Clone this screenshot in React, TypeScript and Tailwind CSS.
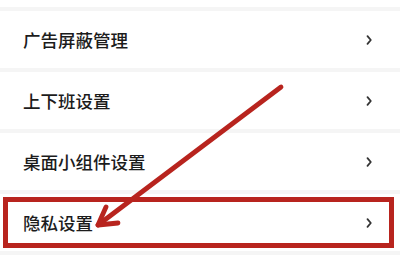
import React from "react";

const rows = ["广告屏蔽管理", "上下班设置", "桌面小组件设置", "隐私设置", ""];

function Chevron() {
    return (
        <svg width="8" height="12" viewBox="0 0 8 12" className="shrink-0">
            <path
                d="M2.5 2.2 L5.8 6 L2.5 9.8"
                fill="none"
                stroke="#333"
                strokeWidth="1.8"
                strokeLinecap="round"
                strokeLinejoin="round"
            />
        </svg>
    );
}

export default function App() {
    return (
        <div className="relative w-[400px] h-[272px] overflow-hidden bg-white font-['Noto_Sans_CJK_SC','Noto_Sans',sans-serif]">
            <div className="h-[7px]" />
            {rows.map((label, i) => (
                <div key={i}>
                    <div className="h-[4px] bg-[#f5f5f5]" />
                    <div className="h-[57px] flex items-center justify-between pl-[23px] pr-[27px]">
                        <span className="text-[17.5px] leading-none font-medium text-[#1c1c1c]">
                            {label}
                        </span>
                        {label ? <Chevron /> : null}
                    </div>
                </div>
            ))}

            {/* annotation box */}
            <div className="absolute left-[3px] top-[197px] w-[391px] h-[51px] border-[5px] border-[#b8241e]" />

            {/* annotation arrow */}
            <svg
                className="absolute inset-0 pointer-events-none"
                width="400"
                height="272"
                viewBox="0 0 400 272"
            >
                <g
                    stroke="#b8241e"
                    strokeWidth="4.8"
                    strokeLinecap="round"
                    strokeLinejoin="round"
                    fill="none"
                >
                    <path d="M281 87 L98 225" />
                    <path d="M106 207 L98 225 L118 223" />
                </g>
            </svg>
        </div>
    );
}
